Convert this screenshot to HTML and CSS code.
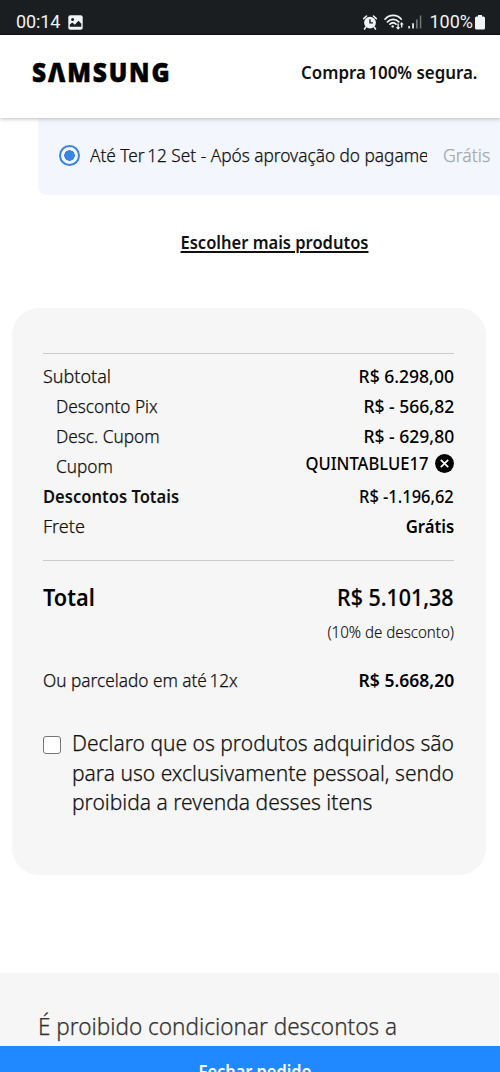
FILE: index.html
```html
<!DOCTYPE html>
<html lang="pt-BR">
<head>
<meta charset="utf-8">
<meta name="viewport" content="width=device-width, initial-scale=1">
<title>Samsung</title>
<link rel="stylesheet" href="styles.css">
</head>
<body>
<div class="screen">
  <div class="status">
    <div class="status-group">
      <span class="clock">00:14</span>
      <svg class="icon-image" width="15" height="15" viewBox="0 0 15 15"><rect x=".3" y=".3" width="14.4" height="14.4" rx="2" fill="#f1f3f4"/><circle cx="4.6" cy="4.4" r="1.5" fill="#1a1e21"/><path d="M1.8 11.8V9.6L4.3 7.4l2.5 2.3 3.7-4 2.8 3v3.1z" fill="#1a1e21"/></svg>
    </div>
    <div class="status-group status-right">
      <svg class="icon-alarm" width="14" height="15" viewBox="0 0 14 15"><circle cx="7" cy="7.6" r="5.9" fill="#f1f3f4"/><path d="M.7 3.6 3.5 1M13.3 3.6 10.5 1M2.7 12.1 1.5 14M11.3 12.1l1.2 1.9" stroke="#f1f3f4" stroke-width="1.6" stroke-linecap="round"/><path d="M7 4.2v3.7h3" fill="none" stroke="#1a1e21" stroke-width="1.4"/></svg>
      <svg class="icon-wifi" width="20" height="16" viewBox="0 0 20 16"><g fill="none" stroke="#f1f3f4" stroke-width="1.7" stroke-linecap="round"><path d="M1 5.2c4.4-5 12-5 16.3 0M3.5 7.8c3.2-3.3 8.1-3.3 11.3 0M6 10.2c1.8-1.7 4.2-1.8 6 0"/></g><circle cx="8.7" cy="12.4" r="1.2" fill="#f1f3f4"/><path d="M13.4 9.5v3.700h-1.600l2.300 2.600 2.300-2.600h-1.600V9.500zM17 13.500v-3h-1.300l2-2.600 2 2.600h-1.300v3z" fill="#f1f3f4"/></svg>
      <svg class="icon-signal" width="14" height="14" viewBox="0 0 14 14"><path d="M.3 11h1.600v2.500H.3zM4.200 8.300h1.700v5.200H4.200z" fill="#f1f3f4"/><path d="M8 4.500h1.700v9H8zM11.800.5h1.500v13h-1.500z" fill="#72777a"/></svg>
      <span class="battery-level">100%</span>
      <svg class="icon-battery" width="10" height="15" viewBox="0 0 10 15"><path d="M3 0h4v1.500h1.500q1.500 0 1.500 1.500v10q0 1.500-1.500 1.500h-7Q0 14.500 0 13V3q0-1.500 1.500-1.500H3z" fill="#f1f3f4"/></svg>
    </div>
  </div>

  <header class="header">
    <span class="logo" role="img" aria-label="Samsung">SΛMSUNG</span>
    <span class="secure">Compra<span class="thin-space"> </span>100% segura.</span>
  </header>

  <main class="main">
    <div class="shipping">
      <span class="radio"></span>
      <span class="shipping-label"><span class="shipping-text">Até Ter<span class="thin-space"> </span>12 Set - Após aprovação do pagame</span></span>
      <span class="shipping-price">Grátis</span>
    </div>

    <a class="more">Escolher mais produtos</a>

    <section class="card">
      <div class="rows">
        <div class="row"><span>Subtotal</span><span class="value">R$ 6.298,00</span></div>
        <div class="row row-sub"><span class="label-tight">Desconto Pix</span><span class="value">R$ - 566,82</span></div>
        <div class="row row-sub"><span class="label-tight">Desc. Cupom</span><span class="value">R$ - 629,80</span></div>
        <div class="row row-sub"><span class="label-tight">Cupom</span>
          <span class="coupon"><span class="value code">QUINTABLUE17</span><svg width="19" height="19" viewBox="0 0 19 19"><circle cx="9.500" cy="9.500" r="9.400" fill="#000"/><path d="M5.800 5.800l7.400 7.400M13.200 5.800l-7.400 7.400" stroke="#fff" stroke-width="1.700"/></svg></span>
        </div>
        <div class="row"><span class="strong">Descontos Totais</span><span class="value discount">R$ -1.196,62</span></div>
        <div class="row"><span>Frete</span><span class="value bold free">Grátis</span></div>
      </div>
      <div class="row total"><span class="total-label">Total</span><span class="total-value">R$ 5.101,38</span></div>
      <div class="note">(10% de desconto)</div>
      <div class="row installments"><span class="label-tight">Ou parcelado em até<span class="thin-space"> </span>12x</span><span class="value bold">R$ 5.668,20</span></div>
      <div class="declare">
        <span class="checkbox"></span>
        <p class="declare-text">Declaro que os produtos adquiridos são<br>para uso exclusivamente pessoal, sendo<br>proibida a revenda desses itens</p>
      </div>
    </section>
  </main>

  <footer class="footer"><span class="footer-text">É proibido condicionar descontos a</span></footer>
  <div class="checkout"><span class="checkout-label">Fechar pedido</span></div>
</div>
</body>
</html>
```
FILE: styles.css
```css
* { box-sizing: border-box; }

body {
  margin: 0;
  background: #fff;
  color: #111;
  font-family: "Noto Sans", "Open Sans", sans-serif;
}

.screen {
  display: flex;
  flex-direction: column;
  width: 500px;
  height: 1072px;
  overflow: hidden;
}

.status {
  display: flex;
  justify-content: space-between;
  flex: none;
  height: 35px;
  padding: 10px 15px 0 16px;
  background: #1a1e21;
  border-bottom: 1px solid #111;
  color: #f1f3f4;
  font: 400 18px/24px Roboto, sans-serif;
}

.status-group { display: flex; align-items: center; height: 24px; }
.clock { letter-spacing: -0.1px; }
.icon-image { margin-left: 8px; }
.icon-alarm { margin-right: 7px; }
.icon-wifi { margin-right: 4px; }
.icon-signal { margin-right: 7px; }
.icon-battery { margin-left: 2px; }

.header {
  display: flex;
  align-items: center;
  justify-content: space-between;
  flex: none;
  position: relative;
  z-index: 1;
  height: 83px;
  padding: 0 22px 10px 32px;
  background: #fff;
  box-shadow: 0 1px 4px rgba(0, 0, 0, 0.25);
}

.logo {
  color: #000;
  font: 900 26.5px/30px "Noto Sans", sans-serif;
  letter-spacing: 2px;
  white-space: nowrap;
  transform: scaleX(0.925);
  transform-origin: left;
  -webkit-text-stroke: 0.5px #000;
}

.secure { padding-bottom: 1px; font-weight: 600; font-size: 18.5px; white-space: nowrap; transform: scaleX(0.912); transform-origin: right; }
.thin-space { letter-spacing: -2px; }

.main {
  display: flex;
  flex-direction: column;
  flex: none;
  height: 855px;
}

.shipping {
  display: flex;
  align-items: center;
  flex: none;
  height: 77px;
  margin-left: 38px;
  padding: 0 0 2px 20px;
  background: #f3f6fd;
  border-radius: 0 0 0 9px;
  font-size: 18px;
  line-height: 30px;
}

.radio {
  flex: none;
  width: 21px;
  height: 21px;
  margin-left: 1px;
  border: 2px solid #3784e2;
  border-radius: 50%;
  background: radial-gradient(circle, #3784e2 5px, #f3f6fd 5.5px);
}

.shipping-label {
  flex: none;
  width: 337px;
  margin-left: 10px;
  padding-bottom: 1px;
  overflow: hidden;
  white-space: nowrap;
}
.shipping-text { display: inline-block; font-weight: 300; transform: scaleX(0.958); transform-origin: left; -webkit-text-stroke: 0.25px; }

.shipping-price { margin-left: 16px; padding-bottom: 1px; color: #a5a7ab; font-weight: 300; -webkit-text-stroke: 0.25px; transform: scaleX(0.98); transform-origin: left; }

.more {
  align-self: center;
  margin-top: 32px;
  margin-left: 49px;
  line-height: 30px;
  font-size: 18px;
  font-weight: 600;
  text-decoration: underline;
  text-decoration-thickness: 1.5px;
  text-underline-offset: 2px;
  transform: scaleX(0.917);
}

.card {
  flex: none;
  width: 474px;
  height: 567px;
  margin: 51px 0 0 12px;
  padding: 45px 32px 0 31px;
  border-radius: 27px;
  background: #f6f6f6;
}

.rows {
  height: 208px;
  padding-top: 7px;
  border: solid #cbcbcb;
  border-width: 1px 0;
}

.row {
  display: flex;
  justify-content: space-between;
  height: 30px;
  font-size: 18px;
  font-weight: 300;
  line-height: 30px;
  white-space: nowrap;
  -webkit-text-stroke: 0.25px;
}

.row-sub { padding-left: 13px; }
.label-tight { transform: scaleX(0.957); transform-origin: left; }
.strong { font-weight: 600; -webkit-text-stroke: 0; transform: scaleX(0.919); transform-origin: left; }
.value { font-weight: 500; color: #000; -webkit-text-stroke: 0; transform: scaleX(0.974); transform-origin: right; }
.value.bold { font-weight: 600; }
.value.code { transform: scaleX(0.922); }
.value.discount { transform: scaleX(0.913); }
.value.free { transform: scaleX(0.93); }

.coupon { display: flex; align-items: center; gap: 7px; height: 24px; }

.total { height: 34px; margin-top: 19px; line-height: 34px; font-size: 24px; color: #000; -webkit-text-stroke: 0; }
.total-label { font-weight: 600; transform: scaleX(0.904); transform-origin: left; }
.total-value { font-weight: 500; transform: scaleX(0.892); transform-origin: right; -webkit-text-stroke: 0.2px; }
.note { margin-top: 6px; text-align: right; font-size: 15.5px; line-height: 24px; font-weight: 300; transform: scaleX(0.973); transform-origin: right; -webkit-text-stroke: 0.15px; }
.installments { margin-top: 21px; }

.declare { display: flex; align-items: flex-start; gap: 11px; margin-top: 33px; }
.checkbox {
  flex: none;
  width: 18px;
  height: 18px;
  margin-top: 8px;
  border: 1px solid #767676;
  border-radius: 3px;
  background: #fff;
}
.declare-text { margin: 0; font-size: 22px; line-height: 29.6px; font-weight: 300; white-space: nowrap; transform: scaleX(0.955); transform-origin: left; -webkit-text-stroke: 0.25px; }

.footer {
  flex: none;
  width: 499px;
  height: 73px;
  padding: 36px 0 0 38px;
  background: #f6f6f6;
  color: #333;
  font-size: 24px;
  line-height: 34px;
  font-weight: 300;
  white-space: nowrap;
}
.footer-text { display: inline-block; transform: scaleX(0.938); transform-origin: left; -webkit-text-stroke: 0.25px; }

.checkout {
  flex: none;
  height: 26px;
  padding: 10px 0 0 10px;
  background: #2189ff;
  color: #fff;
  text-align: center;
  font-size: 18px;
  font-weight: 600;
  line-height: 30px;
}
.checkout-label { display: inline-block; transform: scaleX(0.91); }
```
